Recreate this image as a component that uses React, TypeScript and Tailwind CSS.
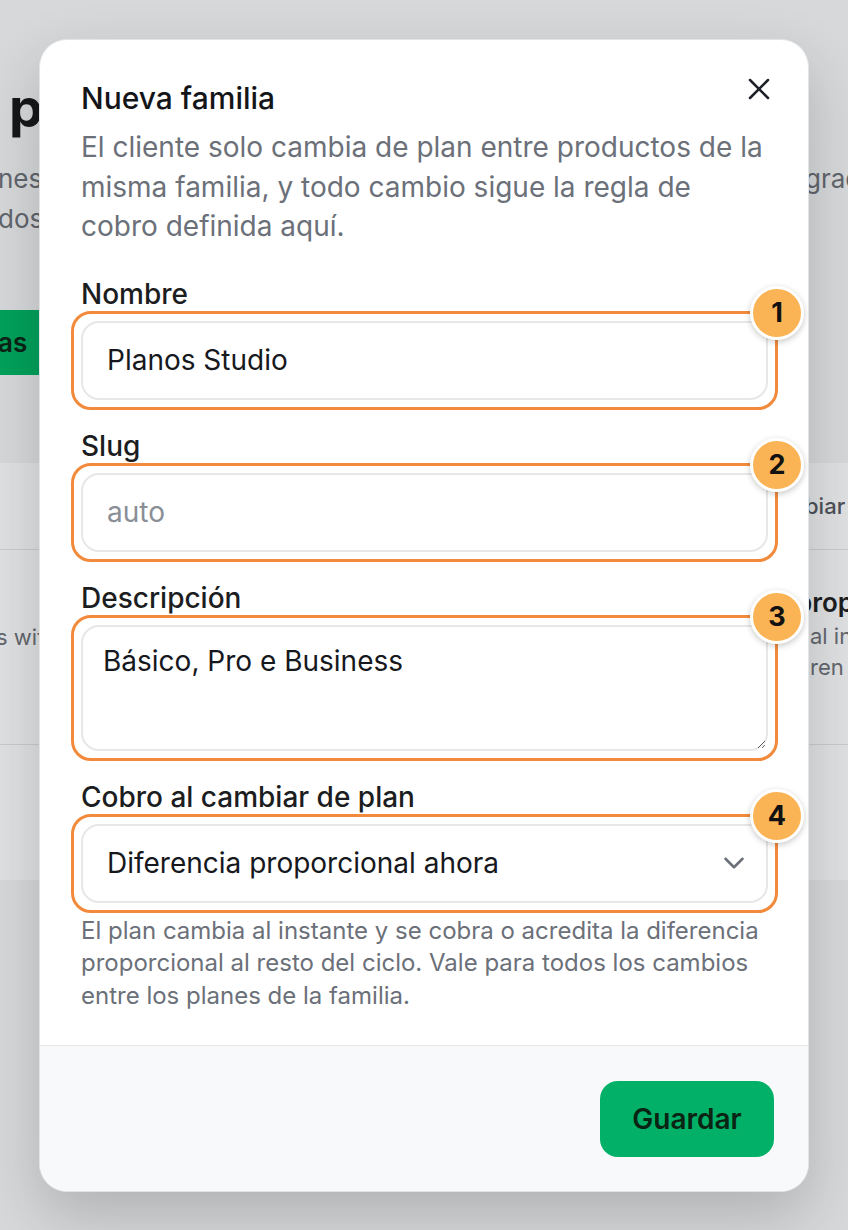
import React from "react";

function Badge({ n }: { n: number }) {
  return (
    <div className="pointer-events-none absolute right-[-36px] top-[-35px] flex h-[54px] w-[54px] items-center justify-center rounded-full border-[3px] border-white bg-[#fbb455] text-[27px] font-bold leading-none text-[#111111] shadow-[0_2px_6px_rgba(0,0,0,0.22)]">
      {n}
    </div>
  );
}

function Highlight() {
  return (
    <div className="pointer-events-none absolute -inset-[10px] rounded-[20px] border-[3px] border-[#f28a3c]" />
  );
}

function Field({
  label,
  n,
  children,
}: {
  label: string;
  n: number;
  children: React.ReactNode;
}) {
  return (
    <div className="flex flex-col">
      <div className="text-[28px] font-medium leading-[32px] text-[#1b1d21]">{label}</div>
      <div className="relative mt-[11px]">
        {children}
        <Highlight />
        <Badge n={n} />
      </div>
    </div>
  );
}

export default function App() {
  return (
    <div className="relative h-[1230px] w-[848px] overflow-hidden bg-[#d6d8da] font-['Inter',sans-serif]">
      {/* background page (under the overlay) */}
      <div className="flex flex-col">
        <div className="pl-[9px] pt-[78px] text-[54px] font-bold leading-[60px] text-[#161719]">planes</div>
        <div className="mt-[21px] flex text-[26px] leading-[40px] text-[#61656c]">
          <div className="-ml-[2px] w-[807px] shrink-0">nes</div>
          <div className="whitespace-nowrap">grados</div>
        </div>
        <div className="flex text-[26px] leading-[40px] text-[#61656c]">
          <div className="-ml-[2px] w-[807px] shrink-0">dos</div>
        </div>
        <div className="mt-[71px] flex h-[65px] w-[60px] items-center bg-[#02a15b] text-[26px] font-semibold text-[#0b2416]">
          <span className="-ml-[2px]">as</span>
        </div>
        <div className="mt-[88px] bg-[#e0e1e3]">
          <div className="flex h-[87px] items-center border-b border-[#c9cbce]">
            <div className="w-[805px] shrink-0" />
            <div className="whitespace-nowrap text-[22px] font-medium text-[#4d5158]">biar</div>
          </div>
          <div className="flex h-[195px] border-b border-[#c9cbce]">
            <div className="w-[796px] shrink-0 pt-[71px] text-[22px] leading-[32px] text-[#62666d]">
              <span className="-ml-[4px] inline-block">s with</span>
            </div>
            <div className="flex flex-col whitespace-nowrap pt-[36px]">
              <div className="text-[26px] font-semibold leading-[34px] text-[#1c1e22]">prop</div>
              <div className="pl-[14px] text-[22px] leading-[32px] text-[#62666d]">al in</div>
              <div className="pl-[14px] text-[22px] leading-[31px] text-[#62666d]">ren</div>
            </div>
          </div>
          <div className="h-[135px]" />
        </div>
      </div>

      {/* modal */}
      <div className="absolute left-[39px] top-[39px] flex w-[770px] flex-col overflow-hidden rounded-[28px] border border-[#e3e4e6] bg-white shadow-[0_24px_60px_rgba(0,0,0,0.18)]">
        <button className="absolute right-[31px] top-[31px] text-[#1f2329]">
          <svg width="36" height="36" viewBox="0 0 24 24" fill="none" stroke="currentColor" strokeWidth="1.7" strokeLinecap="round" strokeLinejoin="round">
            <path d="M18 6 6 18" />
            <path d="m6 6 12 12" />
          </svg>
        </button>
        <div className="flex flex-col pb-[33px] pl-[41px] pr-[40px] pt-[40px]">
          <div className="text-[30px] font-medium leading-[37px] text-[#141518]">Nueva familia</div>
          <p className="mt-[11px] text-[28px] leading-[39.5px] text-[#6b7079]">
            El cliente solo cambia de plan entre productos de la misma familia, y todo cambio sigue la regla de cobro definida aquí.
          </p>
          <div className="mt-[31px] flex flex-col gap-[30px]">
            <Field label="Nombre" n={1}>
              <input
                defaultValue="Planos Studio"
                className="block h-[79px] w-full rounded-[18px] border-2 border-[#e6e7e9] bg-white px-[24px] text-[28px] text-[#16181d] outline-none"
              />
            </Field>
            <Field label="Slug" n={2}>
              <input
                placeholder="auto"
                className="block h-[79px] w-full rounded-[18px] border-2 border-[#e6e7e9] bg-white px-[24px] text-[28px] text-[#16181d] outline-none placeholder:text-[#8a8e96]"
              />
            </Field>
            <Field label="Descripción" n={3}>
              <textarea
                defaultValue="Básico, Pro e Business"
                className="block h-[126px] w-full rounded-[18px] border-2 border-[#e6e7e9] bg-white px-[20px] pt-[15px] text-[28px] leading-[39px] text-[#16181d] outline-none"
              />
            </Field>
            <Field label="Cobro al cambiar de plan" n={4}>
              <div className="flex h-[79px] w-full items-center justify-between rounded-[18px] border-2 border-[#e6e7e9] bg-white pl-[24px] pr-[15px] text-[28px] text-[#16181d]">
                <span>Diferencia proporcional ahora</span>
                <svg width="34" height="34" viewBox="0 0 24 24" fill="none" stroke="#6b7079" strokeWidth="1.8" strokeLinecap="round" strokeLinejoin="round">
                  <path d="m6 9 6 6 6-6" />
                </svg>
              </div>
            </Field>
          </div>
          <p className="mt-[12px] text-[24px] leading-[32.5px] text-[#6b7079]">
            El plan cambia al instante y se cobra o acredita la diferencia proporcional al resto del ciclo. Vale para todos los cambios entre los planes de la familia.
          </p>
        </div>
        <div className="flex h-[146px] items-center justify-end border-t border-[#e6e7e9] bg-[#f8f9fa] pr-[34px]">
          <button className="flex h-[76px] w-[174px] items-center justify-center rounded-[18px] bg-[#03b067] text-[28px] font-semibold text-[#0a2414]">
            Guardar
          </button>
        </div>
      </div>
    </div>
  );
}
